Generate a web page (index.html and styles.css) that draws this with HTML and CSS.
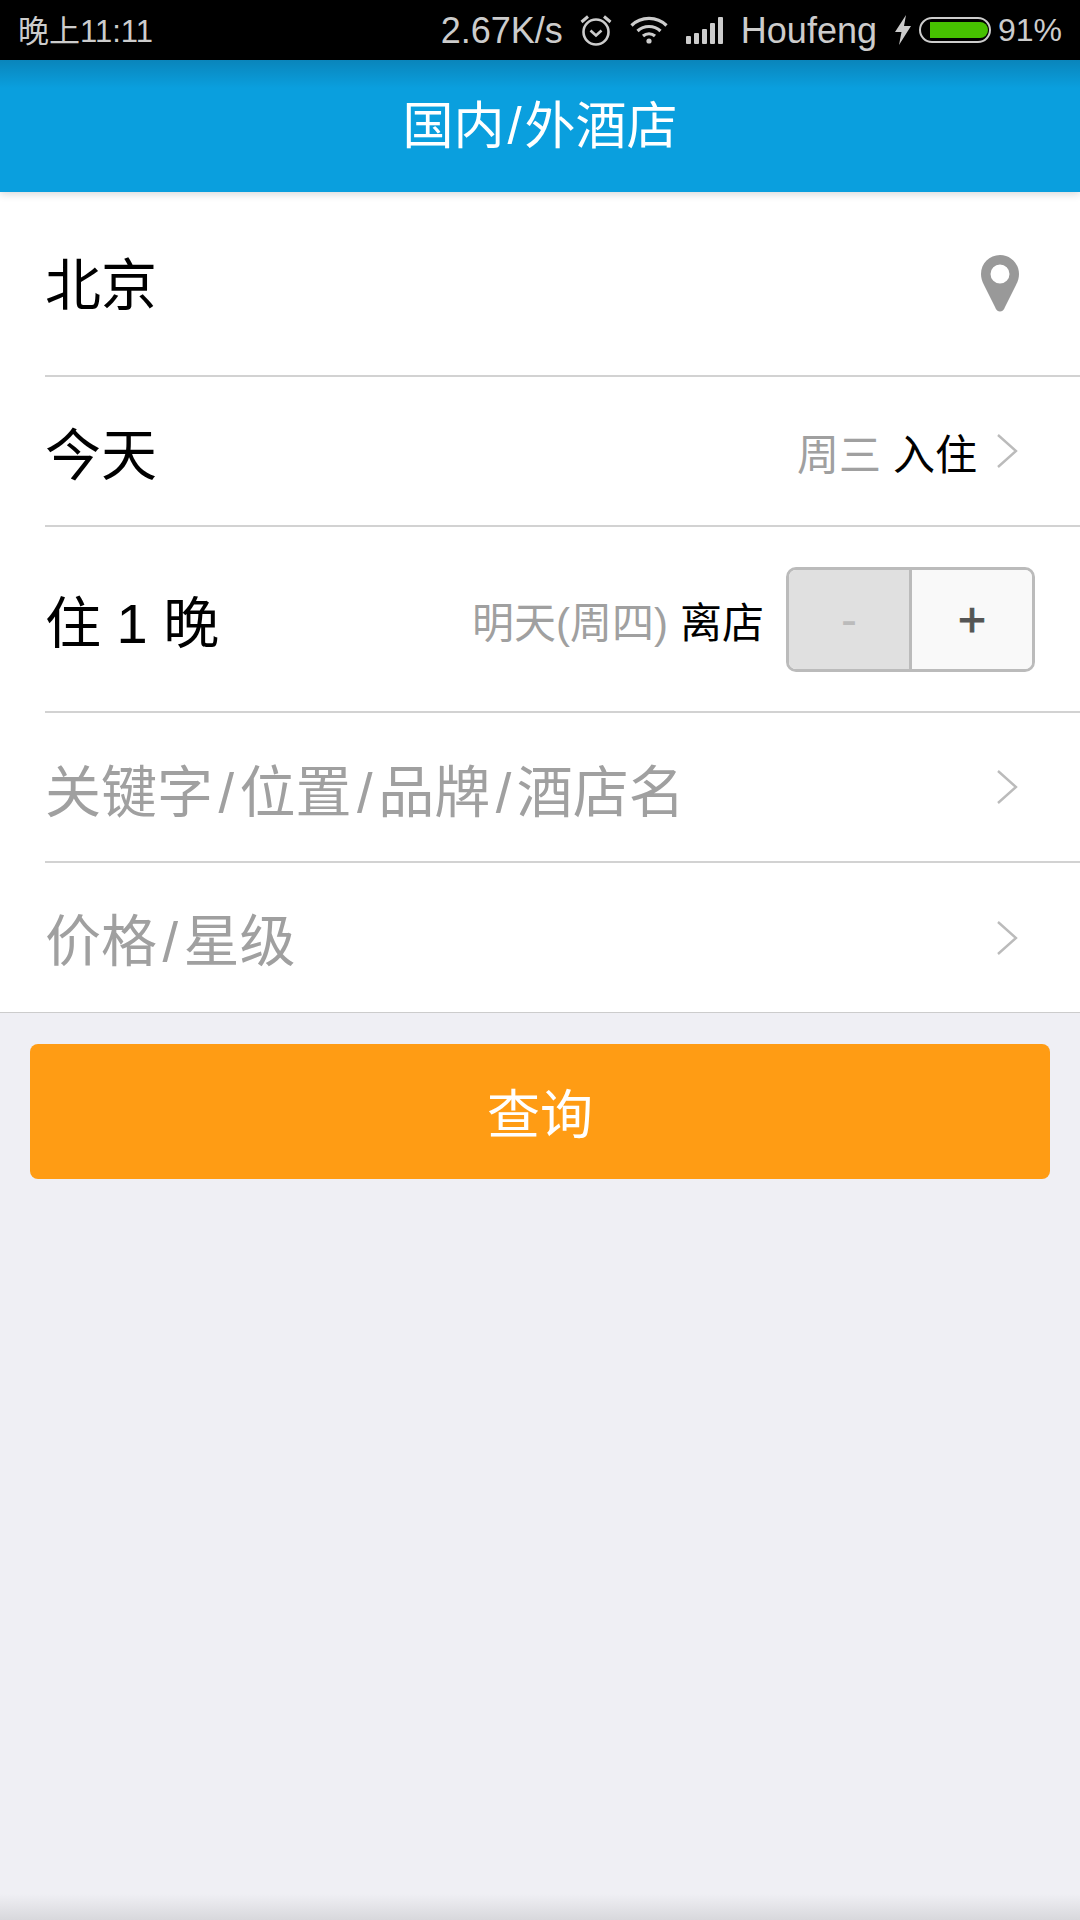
FILE: index.html

```html
<!DOCTYPE html>
<html lang="zh-CN">
<head>
  <meta charset="UTF-8" />
  <meta name="viewport" content="width=device-width, initial-scale=1.0"/>
  <title>国内/外酒店</title>
  <link rel="stylesheet" href="styles.css">
</head>
<body>
  <div class="page">
    <div class="status-bar">
      <span class="status-time">晚上11:11</span>
      <div class="status-right">
        <span class="status-speed">2.67K/s</span>
        <svg class="icon-alarm" width="32" height="32" viewBox="0 0 32 32" fill="none" stroke="#ccc">
          <circle cx="16" cy="18" r="12.5" stroke-width="2.6"/>
          <path d="M10.5 16.5 L16 21.5 L21.5 16.5" stroke-width="2.6"/>
          <path d="M1.5 8 L8 2.5 M30.5 8 L24 2.5" stroke-width="3"/>
        </svg>
        <svg class="icon-wifi" width="38" height="28" viewBox="0 0 38 28" fill="none" stroke="#ccc" stroke-width="3.2">
          <path d="M1.5 9.5 C11 0 27 0 36.5 9.5"/>
          <path d="M7.5 15 C14 9 24 9 30.5 15"/>
          <path d="M13 20 C16.5 17 21.5 17 25 20"/>
          <circle cx="19" cy="25" r="2.6" fill="#ccc" stroke="none"/>
        </svg>
        <div class="icon-signal">
          <i class="bar-1"></i><i class="bar-2"></i><i class="bar-3"></i><i class="bar-4"></i><i class="bar-5"></i>
        </div>
        <span class="status-carrier">Houfeng</span>
        <svg class="icon-bolt" width="16" height="30" viewBox="0 0 16 30">
          <path d="M11 0 L0 17 L6.5 17 L4 30 L16 11 L9 11 Z" fill="#ccc"/>
        </svg>
        <div class="battery"><div class="battery-fill"></div></div>
        <span class="status-percent">91%</span>
      </div>
    </div>

    <div class="title-bar">国内<span class="slash">/</span>外酒店</div>

    <div class="form-list">
      <div class="row row-city">
        <span class="row-label">北京</span>
        <svg class="icon-pin" width="38" height="57" viewBox="0 0 38 57">
          <path fill-rule="evenodd" fill="#999" d="M19 0 C8.5 0 0 8.5 0 19 C0 23 1 26 3 30 L14 52 C16 58 22 58 24 52 L35 30 C37 26 38 23 38 19 C38 8.5 29.5 0 19 0 Z M19 9.5 A9.5 9.5 0 1 1 19 28.5 A9.5 9.5 0 1 1 19 9.5 Z"/>
        </svg>
      </div>
      <div class="row row-checkin">
        <span class="row-label">今天</span>
        <div class="row-side">
          <span class="side-note">周三</span>
          <span class="side-action">入住</span>
          <svg class="chevron" width="22" height="36" viewBox="0 0 22 36" fill="none" stroke="#bbb" stroke-width="2.4"><path d="M2 2 L20 18 L2 34"/></svg>
        </div>
      </div>
      <div class="row row-checkout">
        <span class="row-label">住 1 晚</span>
        <div class="row-side">
          <span class="side-note">明天(周四)</span>
          <span class="side-action">离店</span>
          <div class="stepper">
            <div class="stepper-btn stepper-minus">-</div>
            <div class="stepper-btn stepper-plus">+</div>
          </div>
        </div>
      </div>
      <div class="row row-keyword">
        <span class="row-label placeholder">关键字<span class="slash">/</span>位置<span class="slash">/</span>品牌<span class="slash">/</span>酒店名</span>
        <svg class="chevron" width="22" height="36" viewBox="0 0 22 36" fill="none" stroke="#bbb" stroke-width="2.4"><path d="M2 2 L20 18 L2 34"/></svg>
      </div>
      <div class="row row-price">
        <span class="row-label placeholder">价格<span class="slash">/</span>星级</span>
        <svg class="chevron" width="22" height="36" viewBox="0 0 22 36" fill="none" stroke="#bbb" stroke-width="2.4"><path d="M2 2 L20 18 L2 34"/></svg>
      </div>
    </div>

    <button type="button" class="search-btn">查询</button>

    <div class="bottom-fade"></div>
  </div>
</body>
</html>
```

FILE: styles.css

```css
* {
  box-sizing: border-box;
}

body {
  margin: 0;
  background-color: #efeff4;
  font-family: "Liberation Sans", "Noto Sans CJK SC", sans-serif;
}

.page {
  display: flex;
  flex-direction: column;
  height: 1920px;
  overflow: hidden;
}

/* status bar */
.status-bar {
  display: flex;
  justify-content: space-between;
  align-items: center;
  height: 60px;
  padding: 0 18px;
  background: #000;
  color: #ccc;
  font-size: 32px;
}

.status-time {
  margin-bottom: 3px;
  font-size: 31px;
}

.status-right {
  display: flex;
  align-items: center;
}

.status-speed {
  margin: 2px 17px 0 0;
  font-size: 36px;
}

.icon-alarm {
  margin-right: 18px;
}

.icon-wifi {
  margin-right: 18px;
}

.icon-signal {
  display: flex;
  align-items: flex-end;
  gap: 3px;
  height: 27px;
  margin-right: 18px;
}

.icon-signal i {
  display: block;
  width: 5px;
  background: #ccc;
  border-radius: 1px;
}

.bar-1 { height: 8px; }
.bar-2 { height: 11px; }
.bar-3 { height: 15px; }
.bar-4 { height: 21px; }
.bar-5 { height: 27px; }

.status-carrier {
  margin-top: 2px;
  font-size: 36px;
}

.icon-bolt {
  margin: 0 8px 0 18px;
}

.battery {
  width: 72px;
  height: 26px;
  padding: 3px;
  margin-right: 7px;
  border: 2px solid #ccc;
  border-radius: 13px;
}

.battery-fill {
  width: 58px;
  height: 100%;
  margin-left: 6px;
  background: #46c000;
  border-radius: 0 9px 9px 0;
}

/* title */
.title-bar {
  position: relative;
  height: 132px;
  padding-top: 8px;
  background: linear-gradient(#0a85bb 0, #0a9fde 28px);
  box-shadow: 0 2px 8px rgba(0, 0, 0, 0.16);
  color: #fff;
  font-size: 51px;
  line-height: 118px;
  text-align: center;
}

.title-bar .slash {
  margin: 0 3px;
}

/* form rows */
.form-list {
  background: #fff;
  border-bottom: 1px solid #ccc;
}

.row {
  display: flex;
  justify-content: space-between;
  align-items: center;
  margin-left: 45px;
  padding-right: 62px;
  border-bottom: 2px solid #d2d2d2;
}

.row-city { height: 185px; padding-right: 61px; }
.row-city .row-label { margin-bottom: 6px; }
.row-checkin { height: 150px; }
.row-checkin .row-label { margin-bottom: 2px; }
.row-checkout { height: 186px; padding-right: 45px; }
.row-checkout .row-label { margin-bottom: 2px; }
.row-keyword { height: 150px; }
.row-price { height: 149px; border-bottom: none; }
.row-price .row-label { margin-bottom: 2px; }

.row-label {
  font-size: 56px;
  color: #000;
}

.placeholder {
  color: #a0a0a0;
}

.slash {
  margin: 0 5.5px;
}

.row-side {
  display: flex;
  align-items: center;
}

.side-note {
  font-size: 42px;
  color: #a0a0a0;
}

.side-action {
  margin-left: 12px;
  font-size: 42px;
  color: #000;
}

.chevron {
  display: block;
}

.row-checkin .chevron {
  margin-left: 19px;
}

/* nights stepper */
.stepper {
  display: flex;
  width: 249px;
  height: 105px;
  margin-left: 22px;
  border: 3px solid #bbb;
  border-radius: 10px;
  overflow: hidden;
}

.stepper-btn {
  flex: 1;
  font-size: 48px;
  line-height: 100px;
  text-align: center;
}

.stepper-minus {
  background: #e0e0e0;
  border-right: 3px solid #bbb;
  color: #bbb;
}

.stepper-plus {
  background: #f9f9f9;
  color: #555;
  -webkit-text-stroke: 1px #555;
}

/* search button */
.search-btn {
  display: block;
  width: 1020px;
  height: 135px;
  margin: 31px 0 0 30px;
  padding: 0 0 2px;
  border: none;
  border-radius: 8px;
  background: #ff9c14;
  color: #fff;
  font-family: inherit;
  font-size: 53px;
}

.bottom-fade {
  height: 26px;
  margin-top: auto;
  background: linear-gradient(rgba(216, 216, 220, 0), #d8d8dc);
}
```
